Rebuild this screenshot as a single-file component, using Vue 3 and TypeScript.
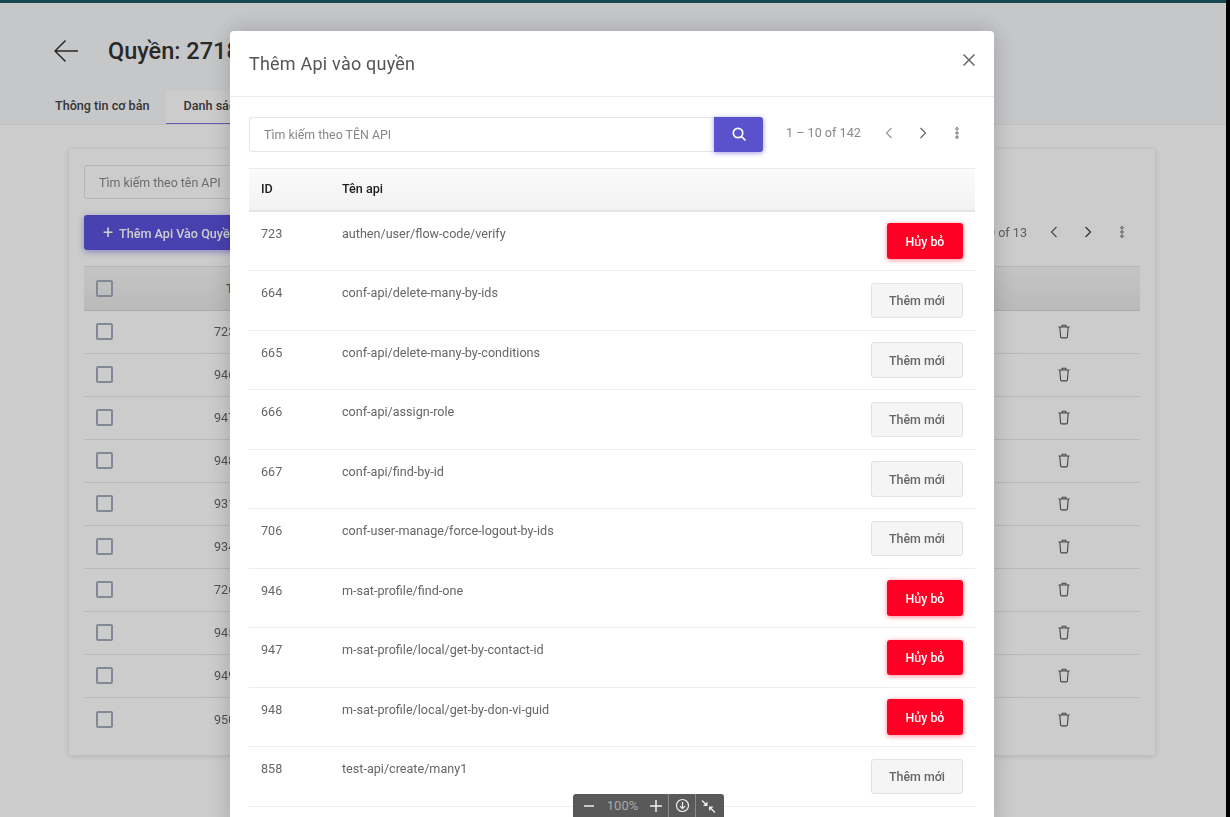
<template>
  <div class="page">
    <div class="shot">
      <div class="topbar"></div>

      <!-- phần nền phía sau hộp thoại -->
      <header class="head">
        <div class="title-row">
          <svg class="back" width="24" height="24" viewBox="0 0 24 24" fill="none" stroke="#333" stroke-width="1.500">
            <path d="M24 12H1.500M11.500 1.500 1 12l10.500 10.500" />
          </svg>
          <h1>Quyền: 2718</h1>
        </div>
        <div class="tabs">
          <span class="tab">Thông tin cơ bản</span>
          <span class="tab active">Danh sách API</span>
        </div>
      </header>

      <section class="card">
        <input class="card-search" type="text" placeholder="Tìm kiếm theo tên API" />
        <div class="card-tools">
          <button class="add-btn"><span class="plus">+</span> Thêm Api Vào Quyền</button>
          <div class="pager">
            <span>1 – 10 of 13</span>
            <svg width="14" height="14" viewBox="0 0 14 14" fill="none" stroke="#666" stroke-width="1.300"><path d="M9.500 2 4.500 7l5 5" /></svg>
            <svg width="14" height="14" viewBox="0 0 14 14" fill="none" stroke="#444" stroke-width="1.300"><path d="m4.500 2 5 5-5 5" /></svg>
            <svg width="14" height="14" viewBox="0 0 14 14" fill="none" stroke="#666" stroke-width="1"><circle cx="7" cy="2.800" r="1.200" /><circle cx="7" cy="7" r="1.200" /><circle cx="7" cy="11.200" r="1.200" /></svg>
          </div>
        </div>
        <div class="bg-table">
          <div class="bg-row bg-head">
            <span class="check"></span>
            <span class="bg-name">Tên</span>
          </div>
          <div v-for="id in bgRows" :key="id" class="bg-row">
            <span class="check"></span>
            <span class="bg-id">{{ id }}</span>
            <svg class="trash" width="14" height="15" viewBox="0 0 14 15" fill="none" stroke="#555" stroke-width="1.100">
              <path d="M1.500 3h11M2.800 3l.8 10a1 1 0 0 0 1 .9h4.800a1 1 0 0 0 1-.9l.8-10M5.200 3V1.300h3.600V3" />
            </svg>
          </div>
        </div>
      </section>

      <div class="backdrop"></div>

      <!-- hộp thoại thêm api -->
      <div class="modal">
        <div class="modal-head">
          <h2>Thêm Api vào quyền</h2>
          <svg width="14" height="14" viewBox="0 0 14 14" fill="none" stroke="#666" stroke-width="1.500">
            <path d="m1.500 1.500 11 11M12.500 1.500l-11 11" />
          </svg>
        </div>
        <div class="modal-body">
          <div class="modal-tools">
            <div class="search-group">
              <input type="text" placeholder="Tìm kiếm theo TÊN API" />
              <button class="search-btn">
                <svg width="16" height="16" viewBox="0 0 16 16" fill="none" stroke="#fff" stroke-width="1.700">
                  <circle cx="7" cy="7" r="4.700" /><path d="m10.500 10.500 4 4" />
                </svg>
              </button>
            </div>
            <div class="modal-pager">
              <span>1 – 10 of 142</span>
              <svg width="14" height="14" viewBox="0 0 14 14" fill="none" stroke="#999" stroke-width="1.200"><path d="M9.500 2 4.500 7l5 5" /></svg>
              <svg width="14" height="14" viewBox="0 0 14 14" fill="none" stroke="#666" stroke-width="1.200"><path d="m4.500 2 5 5-5 5" /></svg>
              <svg width="14" height="14" viewBox="0 0 14 14" fill="none" stroke="#666" stroke-width="1"><circle cx="7" cy="2.800" r="1.200" /><circle cx="7" cy="7" r="1.200" /><circle cx="7" cy="11.200" r="1.200" /></svg>
            </div>
          </div>

          <div class="api-table">
            <div class="api-head">
              <span class="col-id">ID</span>
              <span>Tên api</span>
            </div>
            <div v-for="api in apis" :key="api.id" class="api-row">
              <span class="col-id">{{ api.id }}</span>
              <span class="col-name">{{ api.name }}</span>
              <button v-if="api.added" class="btn-cancel">Hủy bỏ</button>
              <button v-else class="btn-add">Thêm mới</button>
            </div>
          </div>
        </div>
      </div>
    </div>

    <div class="edge"></div>

    <!-- thanh zoom -->
    <div class="zoom-bar">
      <span class="zoom-part">
        <svg width="14" height="14" viewBox="0 0 14 14" stroke="#eee" stroke-width="1.500"><path d="M2 7h10" /></svg>
        <span class="zoom-val">100%</span>
        <svg width="14" height="14" viewBox="0 0 14 14" stroke="#eee" stroke-width="1.500"><path d="M1 7h12M7 1v12" /></svg>
      </span>
      <span class="zoom-icon">
        <svg width="15" height="15" viewBox="0 0 15 15" fill="none" stroke="#eee" stroke-width="1.200">
          <circle cx="7.500" cy="7.500" r="6" /><path d="M7.500 4v6.500M5 8.200l2.500 2.500L10 8.200" />
        </svg>
      </span>
      <span class="zoom-icon shrink">
        <svg width="15" height="15" viewBox="0 0 15 15" fill="#eee" stroke="#eee" stroke-width="1.400">
          <path d="m1 2.500 4 4" fill="none" />
          <path d="M6.500 3.500V8H2z" stroke="none" />
          <path d="m10 10.500 4 4" fill="none" />
          <path d="M8 8.500h4.500L8 13z" stroke="none" />
        </svg>
      </span>
    </div>
  </div>
</template>

<script setup lang="ts">
interface Api {
  id: number
  name: string
  added: boolean
}

const bgRows: number[] = [723, 946, 947, 948, 931, 934, 726, 945, 949, 950]

const apis: Api[] = [
  { id: 723, name: 'authen/user/flow-code/verify', added: true },
  { id: 664, name: 'conf-api/delete-many-by-ids', added: false },
  { id: 665, name: 'conf-api/delete-many-by-conditions', added: false },
  { id: 666, name: 'conf-api/assign-role', added: false },
  { id: 667, name: 'conf-api/find-by-id', added: false },
  { id: 706, name: 'conf-user-manage/force-logout-by-ids', added: false },
  { id: 946, name: 'm-sat-profile/find-one', added: true },
  { id: 947, name: 'm-sat-profile/local/get-by-contact-id', added: true },
  { id: 948, name: 'm-sat-profile/local/get-by-don-vi-guid', added: true },
  { id: 858, name: 'test-api/create/many1', added: false }
]
</script>

<style scoped>
.page {
  position: relative;
  height: 817px;
  overflow: hidden;
  background: #fff;
  font-family: Roboto, "Noto Sans", sans-serif;
  color: #333;
}

/* ảnh gốc hơi mờ */
.shot {
  height: 817px;
  filter: blur(0.35px);
}

.topbar {
  height: 3px;
  background: #174750;
  position: relative;
  z-index: 3;
}

.head {
  height: 122px;
  box-sizing: border-box;
  margin-right: 4px;
  background: #f8f9fc;
  border-bottom: 1px solid #f0f0f0;
  padding: 36px 0 0 54px;
  display: flex;
  flex-direction: column;
}

.title-row {
  display: flex;
  align-items: center;
  gap: 30px;
  height: 24px;
}

.title-row h1 {
  margin: 0;
  font-size: 23.500px;
  font-weight: 500;
  color: #333;
}

.tabs {
  display: flex;
  margin-top: 28px;
  margin-left: 1px;
}

.tab {
  font-size: 12.600px;
  font-weight: 500;
  padding: 7px 17px 0 0;
  height: 33px;
  box-sizing: border-box;
  color: #444;
}

.tab.active {
  background: #fff;
  border-bottom: 1px solid #7a74e6;
  padding: 7px 17px 0;
}

.card {
  margin: 24px 0 0 69px;
  width: 1086px;
  height: 606px;
  box-sizing: border-box;
  padding: 16px 15px 0;
  background: #fff;
  border-radius: 3px;
  box-shadow: 0 1px 6px rgba(0, 0, 0, 0.14);
}

.card-search {
  display: block;
  width: 400px;
  height: 34px;
  box-sizing: border-box;
  padding: 0 14px;
  border: 1px solid #e3e3e3;
  border-radius: 3px;
  font: 12.400px Roboto, sans-serif;
}

.card-search::placeholder {
  color: #888;
}

.card-tools {
  display: flex;
  justify-content: space-between;
  align-items: center;
  margin-top: 16px;
}

.add-btn {
  width: 200px;
  height: 35px;
  border: 0;
  border-radius: 3px;
  padding: 0 0 1px 19px;
  text-align: left;
  background: #5a52dc;
  color: #fff;
  font: 500 12.600px Roboto, sans-serif;
  box-shadow: 0 2px 6px rgba(90, 82, 220, 0.5);
}

.plus {
  font-size: 18px;
  font-weight: 400;
  margin-right: 3px;
  vertical-align: -1px;
}

.pager {
  display: flex;
  align-items: center;
  gap: 20px;
  padding-right: 11px;
  margin-top: -1px;
  font-size: 12.600px;
  color: #777;
}

.bg-table {
  margin-top: 16px;
  height: 474px;
}

.bg-row {
  height: 43px;
  display: flex;
  align-items: center;
  padding-left: 12px;
  border-bottom: 1px solid #e8e8e8;
  box-sizing: border-box;
  font-size: 12.600px;
  color: #666;
  position: relative;
}

.bg-row:last-child {
  border-bottom: 0;
}

.bg-head {
  height: 44.500px;
  background: linear-gradient(#f6f6f6, #e9e9e9);
  border-top: 1px solid #e4e4e4;
  border-bottom: 1px solid #d8d8d8;
  font-weight: 500;
}

.check {
  width: 17px;
  height: 17px;
  box-sizing: border-box;
  border: 2px solid #a3acbb;
  border-radius: 2px;
  flex: none;
}

.bg-id {
  margin-left: 101px;
}

.bg-name {
  margin-left: 113px;
}

.trash {
  margin-left: auto;
  margin-right: 69px;
}

.edge {
  position: absolute;
  top: 0;
  right: 0;
  bottom: 0;
  width: 4px;
  background: #000;
  z-index: 3;
}

.backdrop {
  position: absolute;
  inset: 0;
  background: rgba(0, 0, 0, 0.2);
}

.modal {
  position: absolute;
  left: 230px;
  top: 31px;
  width: 764px;
  height: 800px;
  background: #fff;
  border-radius: 4px 4px 0 0;
  box-shadow: 0 0 24px rgba(0, 0, 0, 0.2);
}

.modal-head {
  height: 66px;
  box-sizing: border-box;
  display: flex;
  align-items: center;
  justify-content: space-between;
  padding: 0 18px 8px 19px;
  border-bottom: 1px solid #e9ecef;
}

.modal-head h2 {
  margin: 8px 0 0;
  font-size: 18px;
  font-weight: 400;
  color: #555;
  letter-spacing: 0.22px;
}

.modal-body {
  padding: 20px 19px 0;
}

.modal-tools {
  display: flex;
  align-items: center;
}

.search-group {
  display: flex;
  width: 514px;
  height: 34.750px;
}

.search-group input {
  flex: 1;
  min-width: 0;
  box-sizing: border-box;
  padding: 0 14px;
  border: 1px solid #e6e6e6;
  border-right: 0;
  border-radius: 3px 0 0 3px;
  font: 12.400px Roboto, sans-serif;
}

.search-group input::placeholder {
  color: #888;
}

.search-btn {
  width: 49px;
  border: 0;
  border-radius: 0 3px 3px 0;
  background: #5a52cc;
  display: flex;
  align-items: center;
  justify-content: center;
  box-shadow: 0 1px 5px rgba(90, 82, 220, 0.6);
}

.modal-pager {
  display: flex;
  align-items: center;
  gap: 20px;
  margin-left: 23px;
  margin-top: -3px;
  font-size: 12.600px;
  color: #888;
}

.modal-pager span {
  margin-right: 1px;
}

.api-table {
  margin-top: 16px;
  width: 726px;
}

.api-head {
  height: 44px;
  box-sizing: border-box;
  display: flex;
  align-items: center;
  padding-bottom: 1px;
  background: linear-gradient(#fbfbfb, #f2f2f2);
  border-top: 1px solid #e9e9e9;
  border-bottom: 2px solid #e4e4e4;
  font-size: 12.600px;
  font-weight: 500;
  color: #222;
}

.api-row {
  height: 59.500px;
  box-sizing: border-box;
  display: flex;
  align-items: center;
  border-bottom: 1px solid #eee;
  font-size: 12.600px;
  color: #666;
}

.col-id {
  width: 93px;
  padding-left: 12px;
  box-sizing: border-box;
  flex: none;
}

.api-row .col-id,
.col-name {
  align-self: flex-start;
  padding-top: 14px;
}

.btn-cancel,
.btn-add {
  margin-left: auto;
  margin-right: 12px;
  height: 35.500px;
  border-radius: 3px;
  font: 500 12.400px Roboto, sans-serif;
}

.btn-cancel {
  width: 76px;
  border: 0;
  background: #ff0024;
  color: #fff;
  box-shadow: 0 1px 5px rgba(255, 0, 36, 0.5);
}

.btn-add {
  width: 92px;
  border: 1px solid #e2e2e2;
  background: #f5f5f5;
  color: #666;
}

.zoom-bar {
  position: absolute;
  left: 573px;
  top: 794px;
  width: 151px;
  height: 23px;
  display: flex;
  background: #595959;
  border-radius: 3px 3px 0 0;
}

.zoom-part {
  width: 96px;
  display: flex;
  align-items: center;
  justify-content: space-between;
  padding: 0 5px 0 9px;
  box-sizing: border-box;
  border-right: 1px solid #8a8a8a;
  flex: none;
}

.zoom-val {
  font-size: 13px;
  color: #aaa;
}

.zoom-icon {
  width: 26px;
  flex: none;
  display: flex;
  align-items: center;
  justify-content: center;
}

.zoom-icon + .zoom-icon {
  border-left: 1px solid #8a8a8a;
  width: 29px;
}

.shrink {
  padding-right: 4px;
  box-sizing: border-box;
}
</style>
